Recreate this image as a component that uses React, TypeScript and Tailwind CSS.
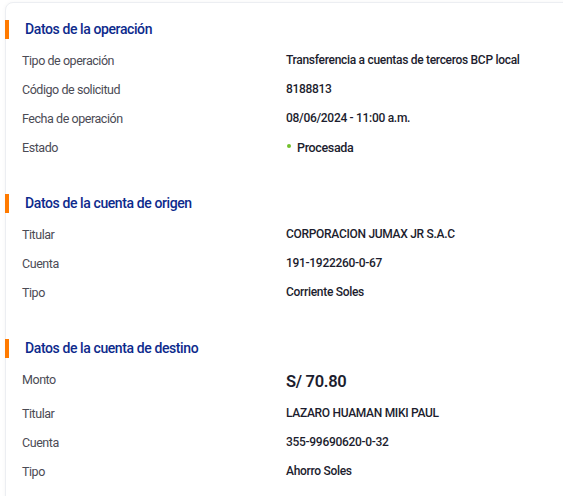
type Row = { label: string; value: string; big?: boolean; status?: boolean };

const sections: { title: string; rows: Row[] }[] = [
  {
    title: "Datos de la operación",
    rows: [
      { label: "Tipo de operación", value: "Transferencia a cuentas de terceros BCP local" },
      { label: "Código de solicitud", value: "8188813" },
      { label: "Fecha de operación", value: "08/06/2024 - 11:00 a.m." },
      { label: "Estado", value: "Procesada", status: true },
    ],
  },
  {
    title: "Datos de la cuenta de origen",
    rows: [
      { label: "Titular", value: "CORPORACION JUMAX JR S.A.C" },
      { label: "Cuenta", value: "191-1922260-0-67" },
      { label: "Tipo", value: "Corriente Soles" },
    ],
  },
  {
    title: "Datos de la cuenta de destino",
    rows: [
      { label: "Monto", value: "S/ 70.80", big: true },
      { label: "Titular", value: "LAZARO HUAMAN MIKI PAUL" },
      { label: "Cuenta", value: "355-99690620-0-32" },
      { label: "Tipo", value: "Ahorro Soles" },
    ],
  },
];

function DetailRow({ row }: { row: Row }) {
  return (
    <div className={`flex items-start ${row.big ? "h-[34px]" : "h-[29px]"}`}>
      <div className="w-[280px] shrink-0 pl-[16px] text-[12.5px] leading-[29px] tracking-[-0.45px] text-[#4b4b55]">
        {row.label}
      </div>
      {row.big ? (
        <div className="text-[16.5px] font-semibold leading-[34px] tracking-[-0.3px] text-[#1c1d2e]">
          {row.value}
        </div>
      ) : row.status ? (
        <div className="flex items-center gap-[6px] text-[12.5px] font-medium leading-[29px] tracking-[-0.35px] text-[#1c1d2e]">
          <span className="ml-px mt-[-3px] h-[4px] w-[4px] rounded-full bg-[#72c02c]" />
          <span>{row.value}</span>
        </div>
      ) : (
        <div className="text-[12px] font-medium leading-[29px] tracking-[-0.3px] text-[#1c1d2e]">
          {row.value}
        </div>
      )}
    </div>
  );
}

export default function App() {
  return (
    <div className="h-[496px] w-[563px] overflow-hidden bg-white pl-[5px] pt-[2px] font-['Roboto',sans-serif]">
      <div className="h-[520px] w-[600px] rounded-tl-lg border border-[#eceef2] bg-white pt-[17px] shadow-[0_0_4px_rgba(0,0,0,0.04)]">
        {sections.map((s) => (
          <section key={s.title} className="pb-[32px]">
            <div className="-ml-px flex h-[19px] items-center">
              <span className="h-[19px] w-[4px] bg-[#ff7a00]" />
              <h2 className="ml-[16px] text-[14px] font-medium tracking-[-0.4px] text-[#0d2a8c]">{s.title}</h2>
            </div>
            <div className="mt-[7px]">
              {s.rows.map((r) => (
                <DetailRow key={r.label} row={r} />
              ))}
            </div>
          </section>
        ))}
      </div>
    </div>
  );
}
